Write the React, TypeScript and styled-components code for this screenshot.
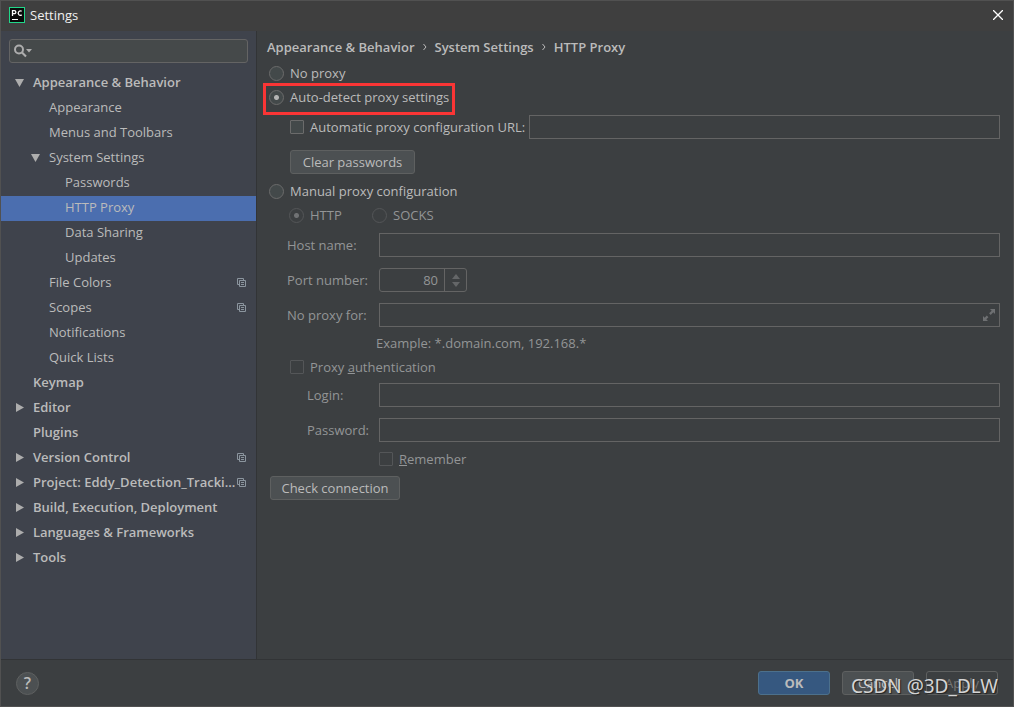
import React from 'react';
import styled, { createGlobalStyle, css } from 'styled-components';

const GlobalStyle = createGlobalStyle`
  *, *::before, *::after { box-sizing: border-box; }
  body {
    margin: 0;
    background: #3c3f41;
    color: #bbbbbb;
    font: 13px/16px "Open Sans", "Noto Sans", sans-serif;
  }
  button, input { font: inherit; color: inherit; }
`;

const Window = styled.div`
  display: flex;
  flex-direction: column;
  min-height: 100vh;
  border: 1px solid #515151;
`;

const TitleBar = styled.header`
  display: flex;
  align-items: center;
  gap: 5px;
  height: 30px;
  padding: 0 7px 2px 8px;
  background: #3f3f3f;
  color: #f0f0f0;
`;

const Title = styled.h1`
  flex: 1;
  margin: 0;
  font-size: 13px;
  font-weight: 400;
`;

const CloseButton = styled.button`
  display: flex;
  align-items: center;
  justify-content: center;
  width: 16px;
  height: 16px;
  padding: 0;
  border: 0;
  background: none;
`;

const Body = styled.div`
  display: flex;
  flex: 1;
`;

const Sidebar = styled.nav`
  flex: none;
  width: 256px;
  padding-top: 8px;
  background: #3f434c;
  border-right: 1px solid #323436;
`;

const SearchBox = styled.label`
  display: flex;
  align-items: center;
  height: 24px;
  margin: 0 8px 8px;
  padding: 0 4px;
  border: 1px solid #646464;
  border-radius: 3px;
  background: #45494a;
`;

const SearchInput = styled.input`
  flex: 1;
  min-width: 0;
  border: 0;
  outline: 0;
  background: none;
`;

const Tree = styled.ul`
  margin: 0;
  padding: 0;
  list-style: none;
`;

const TreeRow = styled.a<{ $level: number; $selected?: boolean }>`
  display: flex;
  align-items: center;
  height: 25px;
  padding-right: 10px;
  padding-bottom: 3px;
  padding-left: ${p => 13 + p.$level * 16}px;
  background: ${p => (p.$selected ? '#4b6eaf' : 'transparent')};
  color: inherit;
  font-weight: ${p => (p.$level === 0 ? 600 : 400)};
  text-decoration: none;
`;

const Arrow = styled.span`
  display: flex;
  flex: none;
  width: 19px;
`;

const TreeLabel = styled.span`
  flex: 1;
  min-width: 0;
  white-space: nowrap;
`;

const Main = styled.main`
  flex: 1;
  min-width: 0;
  padding: 4px 13px 12px 10px;
`;

const Breadcrumbs = styled.h2`
  display: flex;
  align-items: center;
  gap: 8px;
  height: 24px;
  margin: 0;
  font-size: 13px;
  font-weight: 600;
`;

const Form = styled.form`
  display: flex;
  flex-direction: column;
  padding-left: 2px;
`;

const Row = styled.div<{ $indent?: number; $gap?: number; $disabled?: boolean }>`
  display: flex;
  align-items: center;
  height: 24px;
  margin-top: ${p => p.$gap ?? 0}px;
  padding-left: ${p => p.$indent ?? 0}px;
  color: ${p => (p.$disabled ? '#939596' : '#bbbbbb')};
`;

const Choice = styled.label<{ $width?: number }>`
  position: relative;
  display: flex;
  align-items: center;
  gap: 6px;
  width: ${p => (p.$width ? `${p.$width}px` : 'auto')};
  white-space: nowrap;
`;

const Highlight = styled.span`
  position: absolute;
  inset: -6px -6px -10px -6px;
  border: 3px solid #fa3535;
  pointer-events: none;
`;

const Radio = styled.input.attrs({ type: 'radio' })`
  appearance: none;
  flex: none;
  width: 15px;
  height: 15px;
  margin: 0;
  border: 1px solid #6b6b6b;
  border-radius: 50%;
  background: #43494a;
  &:checked { background: radial-gradient(circle, #b4b4b4 2px, #43494a 3px); }
  &:disabled { border-color: #545658; background: #3c3f41; }
  &:disabled:checked { background: radial-gradient(circle, #707274 2px, #3c3f41 3px); }
`;

const Checkbox = styled.input.attrs({ type: 'checkbox' })`
  appearance: none;
  flex: none;
  width: 14px;
  height: 14px;
  margin: 0;
  border: 1px solid #6b6b6b;
  border-radius: 1px;
  background: #43494a;
  &:disabled { border-color: #545658; background: #3c3f41; }
`;

const FieldLabel = styled.label<{ $width: number }>`
  flex: none;
  width: ${p => p.$width}px;
`;

const fieldBox = css`
  height: 24px;
  border: 1px solid #646464;
  background: #3c3f41;
`;

const TextField = styled.input`
  ${fieldBox}
  flex: 1;
  min-width: 0;
  padding: 0 6px;
`;

const ExpandableField = styled.div`
  ${fieldBox}
  display: flex;
  flex: 1;
  align-items: center;
  padding-right: 3px;
`;

const BareInput = styled.input`
  flex: 1;
  min-width: 0;
  padding: 0 6px;
  border: 0;
  background: none;
`;

const IconButton = styled.button`
  display: flex;
  padding: 0;
  border: 0;
  background: none;
`;

const Spinner = styled.div`
  ${fieldBox}
  display: flex;
  width: 88px;
  border-radius: 3px;
`;

const SpinnerInput = styled(BareInput)`
  text-align: right;
`;

const SpinnerButtons = styled.div`
  display: flex;
  flex-direction: column;
  align-items: center;
  justify-content: center;
  gap: 3px;
  width: 22px;
  border-left: 1px solid #646464;
`;

const Button = styled.button<{ $width: number; $primary?: boolean }>`
  width: ${p => p.$width}px;
  height: 24px;
  padding: 0;
  border: 1px solid ${p => (p.$primary ? '#4c708c' : '#5e6060')};
  border-radius: 3px;
  background: ${p => (p.$primary ? '#365880' : '#4c5052')};
  font-weight: ${p => (p.$primary ? 700 : 400)};
  white-space: nowrap;
  &:disabled { background: #3c3f41; color: #777777; }
`;

const Footer = styled.footer`
  position: relative;
  display: flex;
  align-items: center;
  gap: 12px;
  height: 47px;
  padding: 0 15px;
  border-top: 1px solid #323436;
`;

const HelpButton = styled.button`
  width: 23px;
  height: 23px;
  margin-right: auto;
  padding: 0;
  border: 1px solid #5e6060;
  border-radius: 50%;
  background: #4c5052;
  font-size: 16px;
  font-weight: 600;
`;

const Watermark = styled.span`
  position: absolute;
  right: 15px;
  bottom: 7px;
  color: #d4d4d4;
  font-family: "Noto Sans", sans-serif;
  font-size: 19px;
  line-height: 26px;
  text-shadow: 1px 1px 1px #222222;
  pointer-events: none;
`;

type Item = { label: string; level: number; arrow?: 'open' | 'closed'; project?: boolean; selected?: boolean };

const items: Item[] = [
  { label: 'Appearance & Behavior', level: 0, arrow: 'open' },
  { label: 'Appearance', level: 1 },
  { label: 'Menus and Toolbars', level: 1 },
  { label: 'System Settings', level: 1, arrow: 'open' },
  { label: 'Passwords', level: 2 },
  { label: 'HTTP Proxy', level: 2, selected: true },
  { label: 'Data Sharing', level: 2 },
  { label: 'Updates', level: 2 },
  { label: 'File Colors', level: 1, project: true },
  { label: 'Scopes', level: 1, project: true },
  { label: 'Notifications', level: 1 },
  { label: 'Quick Lists', level: 1 },
  { label: 'Keymap', level: 0 },
  { label: 'Editor', level: 0, arrow: 'closed' },
  { label: 'Plugins', level: 0 },
  { label: 'Version Control', level: 0, arrow: 'closed', project: true },
  { label: 'Project: Eddy_Detection_Tracki...', level: 0, arrow: 'closed', project: true },
  { label: 'Build, Execution, Deployment', level: 0, arrow: 'closed' },
  { label: 'Languages & Frameworks', level: 0, arrow: 'closed' },
  { label: 'Tools', level: 0, arrow: 'closed' },
];

const Logo = () => (
  <svg width="16" height="16" viewBox="0 0 16 16" aria-hidden="true">
    <rect width="16" height="16" fill="#21d789" />
    <rect x="1" y="1" width="14" height="14" fill="#0b0b0b" />
    <path d="M3.500 9V3.600h1.800a1.500 1.500 0 0 1 0 3.100H3.500M12.700 4.300a2.200 2.200 0 1 0 0 3.600" fill="none" stroke="#fff" strokeWidth="1.300" />
    <rect x="3" y="12" width="6" height="1" fill="#fff" />
  </svg>
);

const ArrowIcon = ({ open }: { open: boolean }) => (
  <svg width="10" height="10" viewBox="0 0 10 10" aria-hidden="true">
    <path d={open ? 'M1 2h9L5.500 10z' : 'M2 1v9l8-4.500z'} fill="#adadad" />
  </svg>
);

const ProjectIcon = () => (
  <svg width="9" height="9" viewBox="0 0 9 9" fill="none" stroke="#8b959e" aria-label="For current project">
    <path d="M2.500 6.500h-2v-6h6v2M2.500 2.500h6v6h-6zM4 4.500h3M4 6.500h3" />
  </svg>
);

const Chevron = () => (
  <svg width="4" height="8" viewBox="0 0 4 8" fill="none" stroke="#bbbbbb" aria-hidden="true">
    <path d="M.5 1l2.500 3L.5 7" />
  </svg>
);

export default function App() {
  return (
    <>
      <GlobalStyle />
      <Window>
        <TitleBar>
          <Logo />
          <Title>Settings</Title>
          <CloseButton aria-label="Close">
            <svg width="10" height="10" viewBox="0 0 10 10" stroke="#fff" strokeWidth="1.300">
              <path d="M0 0l10 10M10 0L0 10" />
            </svg>
          </CloseButton>
        </TitleBar>
        <Body>
          <Sidebar>
            <SearchBox>
              <svg width="19" height="14" viewBox="0 0 19 14" aria-hidden="true">
                <circle cx="5" cy="5.500" r="4" fill="none" stroke="#adadad" strokeWidth="2" />
                <path d="M8 8.500l4 4" stroke="#adadad" strokeWidth="2.200" />
                <path d="M12 5h6l-3 3.500z" fill="#adadad" />
              </svg>
              <SearchInput type="text" aria-label="Search settings" />
            </SearchBox>
            <Tree>
              {items.map(item => (
                <li key={item.label}>
                  <TreeRow href="#" $level={item.level} $selected={item.selected}>
                    <Arrow>{item.arrow && <ArrowIcon open={item.arrow === 'open'} />}</Arrow>
                    <TreeLabel>{item.label}</TreeLabel>
                    {item.project && <ProjectIcon />}
                  </TreeRow>
                </li>
              ))}
            </Tree>
          </Sidebar>
          <Main>
            <Breadcrumbs>
              <span>Appearance &amp; Behavior</span>
              <Chevron />
              <span>System Settings</span>
              <Chevron />
              <span>HTTP Proxy</span>
            </Breadcrumbs>
            <Form>
              <Row $gap={2}>
                <Choice><Radio name="mode" />No proxy</Choice>
              </Row>
              <Row>
                <Choice><Radio name="mode" defaultChecked />Auto-detect proxy settings<Highlight /></Choice>
              </Row>
              <Row $gap={6} $indent={21}>
                <Choice $width={239}><Checkbox />Automatic proxy configuration URL:</Choice>
                <TextField type="text" aria-label="Automatic proxy configuration URL" disabled />
              </Row>
              <Row $gap={11} $indent={21}>
                <Button type="button" $width={125}>Clear passwords</Button>
              </Row>
              <Row $gap={5}>
                <Choice><Radio name="mode" />Manual proxy configuration</Choice>
              </Row>
              <Row $indent={20} $disabled>
                <Choice $width={83}><Radio name="protocol" defaultChecked disabled />HTTP</Choice>
                <Choice><Radio name="protocol" disabled />SOCKS</Choice>
              </Row>
              <Row $gap={6} $indent={18} $disabled>
                <FieldLabel htmlFor="host" $width={92}>Host name:</FieldLabel>
                <TextField id="host" type="text" disabled />
              </Row>
              <Row $gap={11} $indent={18} $disabled>
                <FieldLabel htmlFor="port" $width={92}>Port number:</FieldLabel>
                <Spinner>
                  <SpinnerInput id="port" type="text" defaultValue="80" disabled />
                  <SpinnerButtons>
                    <IconButton type="button" aria-label="Increase" disabled>
                      <svg width="8" height="5" viewBox="0 0 8 5"><path d="M0 5l4-5 4 5z" fill="#646668" /></svg>
                    </IconButton>
                    <IconButton type="button" aria-label="Decrease" disabled>
                      <svg width="8" height="5" viewBox="0 0 8 5"><path d="M0 0l4 5 4-5z" fill="#646668" /></svg>
                    </IconButton>
                  </SpinnerButtons>
                </Spinner>
              </Row>
              <Row $gap={11} $indent={18} $disabled>
                <FieldLabel htmlFor="bypass" $width={92}>No proxy for:</FieldLabel>
                <ExpandableField>
                  <BareInput id="bypass" type="text" disabled />
                  <IconButton type="button" aria-label="Expand" disabled>
                    <svg width="14" height="14" viewBox="0 0 14 14" fill="#6e7072">
                      <path d="M8 1h5v5l-1.700-1.700-2.600 2.600-1.600-1.600 2.600-2.600zM6 13H1V8l1.700 1.700 2.100-2.100 1.600 1.600-2.100 2.100z" />
                    </svg>
                  </IconButton>
                </ExpandableField>
              </Row>
              <Row $gap={4} $indent={107} $disabled>Example: *.domain.com, 192.168.*</Row>
              <Row $indent={21} $disabled>
                <Choice><Checkbox disabled /><span>Proxy <u>a</u>uthentication</span></Choice>
              </Row>
              <Row $gap={4} $indent={38} $disabled>
                <FieldLabel htmlFor="login" $width={72}>Login:</FieldLabel>
                <TextField id="login" type="text" disabled />
              </Row>
              <Row $gap={11} $indent={38} $disabled>
                <FieldLabel htmlFor="password" $width={72}>Password:</FieldLabel>
                <TextField id="password" type="password" disabled />
              </Row>
              <Row $gap={5} $indent={110} $disabled>
                <Choice><Checkbox disabled /><span><u>R</u>emember</span></Choice>
              </Row>
              <Row $gap={5} $indent={1}>
                <Button type="button" $width={130}>Check connection</Button>
              </Row>
            </Form>
          </Main>
        </Body>
        <Footer>
          <HelpButton aria-label="Help">?</HelpButton>
          <Button $width={72} $primary>OK</Button>
          <Button $width={72}>Cancel</Button>
          <Button $width={72} disabled>Apply</Button>
          <Watermark>CSDN @3D_DLW</Watermark>
        </Footer>
      </Window>
    </>
  );
}
